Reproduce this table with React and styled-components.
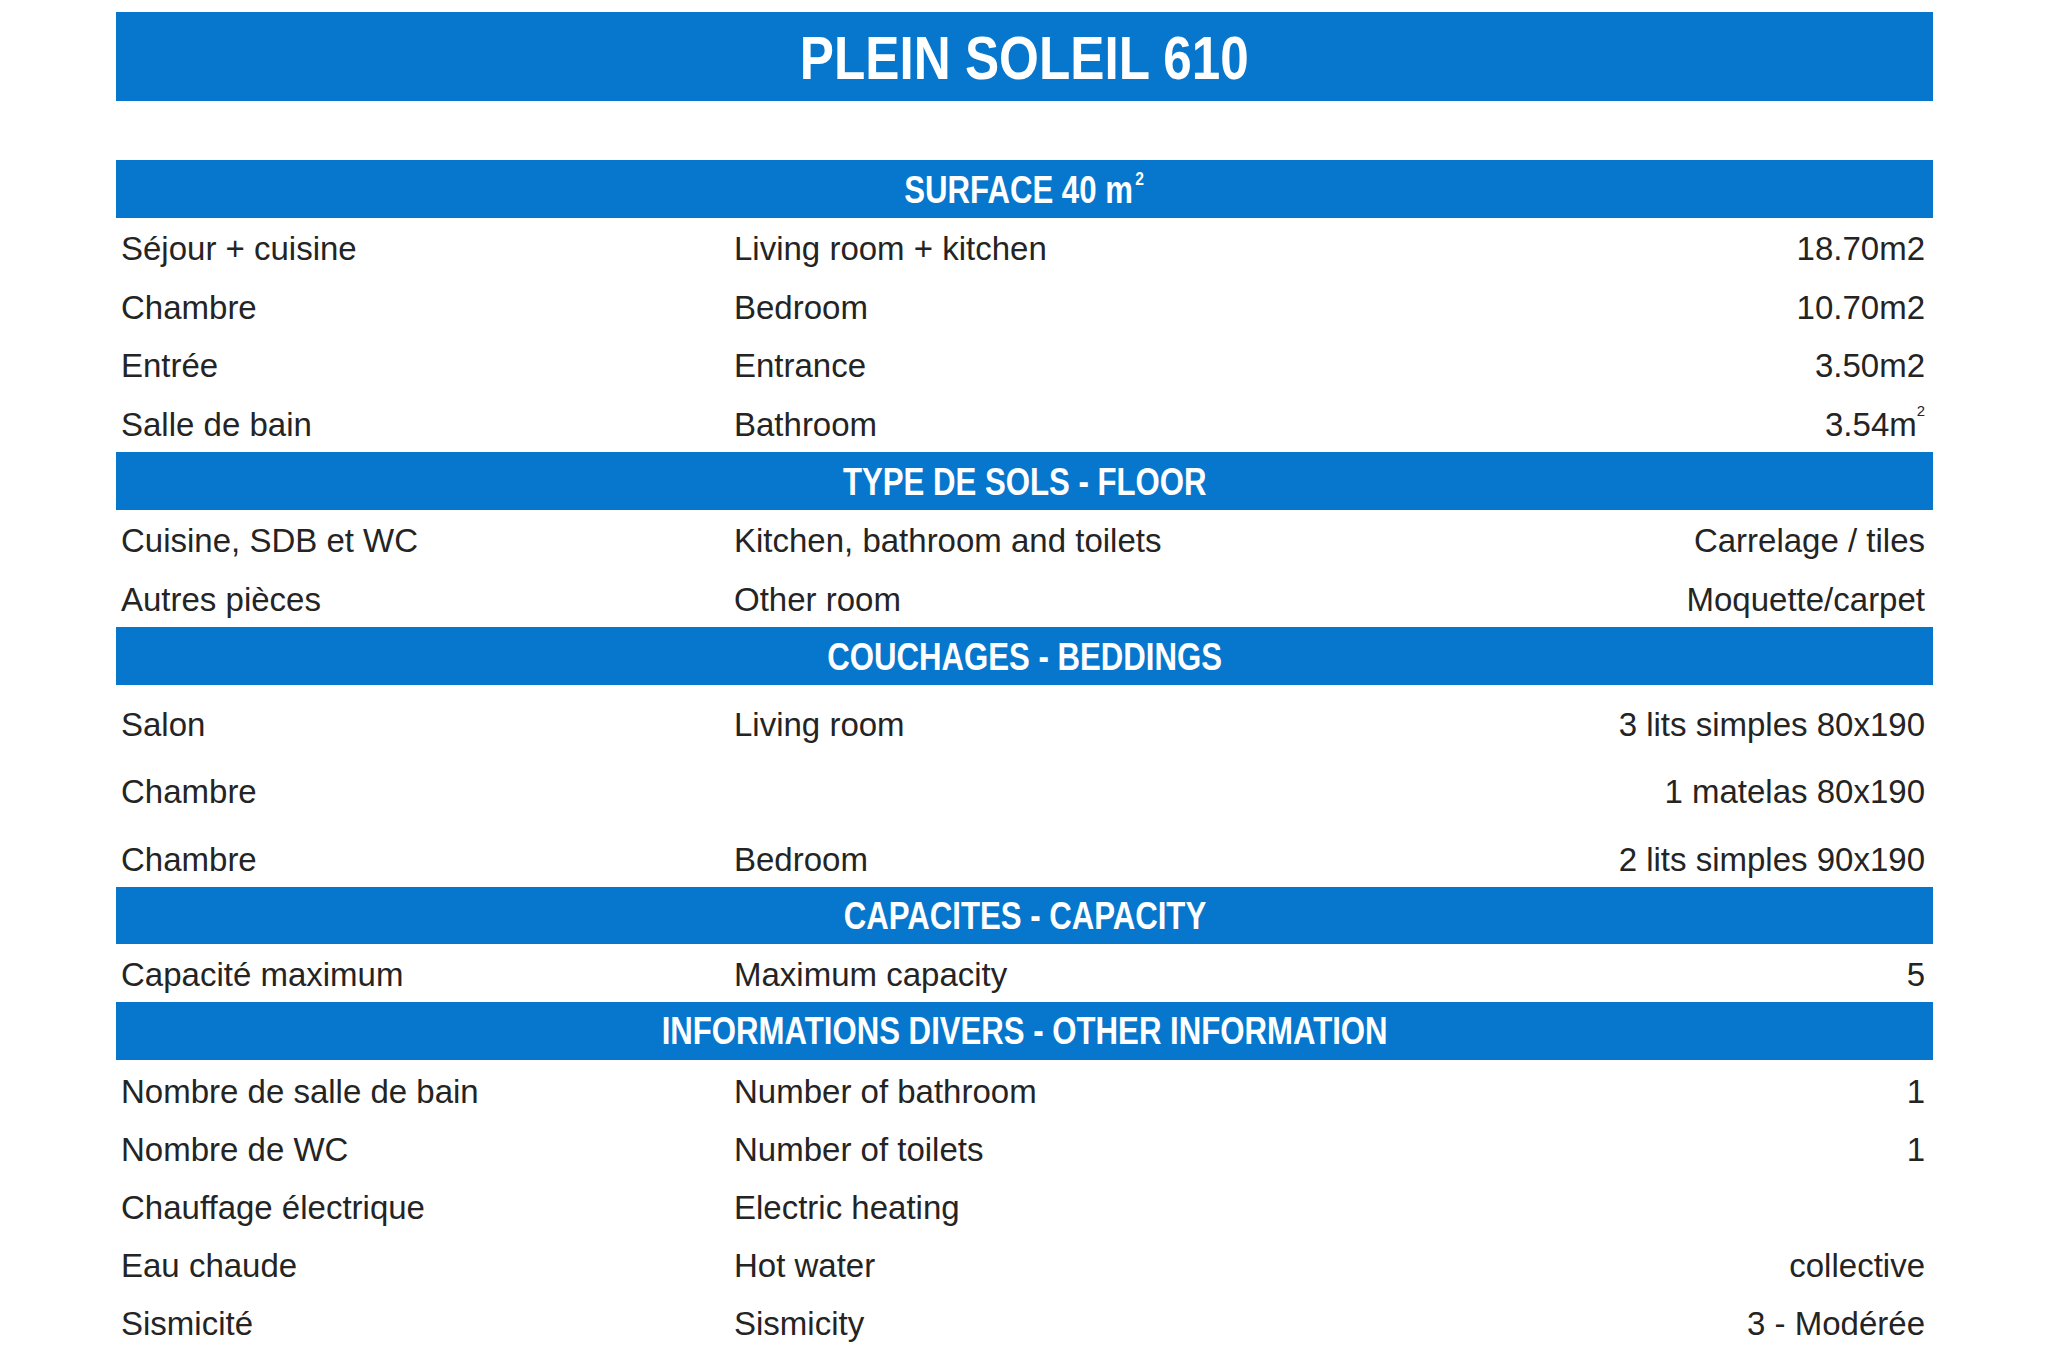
import React from "react";
import styled, { createGlobalStyle } from "styled-components";

const Global = createGlobalStyle`
  html, body { margin: 0; padding: 0; background: #ffffff; }
  body { font-family: "Liberation Sans", Arial, sans-serif; }
`;

const BLUE = "#0677cd";
const HEAD_FONT = `"Liberation Sans Narrow", "Liberation Sans", Arial, sans-serif`;

const Page = styled.div`
  width: 1817px;
  margin: 0 0 0 116px;
  padding-top: 12px;
  display: flex;
  flex-direction: column;
`;

const TitleBar = styled.h1`
  margin: 0 0 59px 0;
  height: 89px;
  background: ${BLUE};
  color: #fff;
  display: flex;
  align-items: center;
  justify-content: center;
  font-family: ${HEAD_FONT};
  font-weight: 700;
  font-size: 61px;
  padding-top: 2px;
  box-sizing: border-box;
`;

const Narrow = styled.span`
  display: inline-block;
  white-space: nowrap;
  transform: scaleX(${(p) => p.$sx});
`;

const SectionBar = styled.div`
  height: ${(p) => p.$h || 58}px;
  background: ${BLUE};
  color: #fff;
  display: flex;
  align-items: center;
  justify-content: center;
  font-family: ${HEAD_FONT};
  font-weight: 700;
  font-size: 38px;
  padding-top: 2px;
  box-sizing: border-box;
  sup { font-size: 0.5em; line-height: 0; position: relative; top: -0.2em; margin-left: 3px; }
`;

const Row = styled.div`
  height: ${(p) => p.$h}px;
  display: grid;
  grid-template-columns: 613px 1fr auto;
  align-items: center;
  padding: ${(p) => p.$pt}px 8px 0 5px;
  box-sizing: border-box;
  color: #242424;
  font-size: 33px;
  line-height: 1;
  sup { font-size: 0.45em; line-height: 0; position: relative; top: -0.5em; }
`;

const Cell = styled.span`
  white-space: nowrap;
  text-align: ${(p) => (p.$right ? "right" : "left")};
`;

const sections = [
  {
    title: (
      <>
        SURFACE 40 m<sup>2</sup>
      </>
    ),
    h: 58.5,
    pt: 3,
    rows: [
      ["Séjour + cuisine", "Living room + kitchen", "18.70m2"],
      ["Chambre", "Bedroom", "10.70m2"],
      ["Entrée", "Entrance", "3.50m2"],
      ["Salle de bain", "Bathroom", <>3.54m<sup>2</sup></>],
    ],
  },
  {
    title: "TYPE DE SOLS - FLOOR",
    h: 58.5,
    pt: 3,
    rows: [
      ["Cuisine, SDB et WC", "Kitchen, bathroom and toilets", "Carrelage / tiles"],
      ["Autres pièces", "Other room", "Moquette/carpet"],
    ],
  },
  {
    title: "COUCHAGES - BEDDINGS",
    h: 67.3,
    pt: 12,
    rows: [
      ["Salon", "Living room", "3 lits simples 80x190"],
      ["Chambre", "", "1 matelas 80x190"],
      ["Chambre", "Bedroom", "2 lits simples 90x190"],
    ],
  },
  {
    title: "CAPACITES - CAPACITY",
    h: 58,
    pt: 4,
    barH: 57,
    rows: [["Capacité maximum", "Maximum capacity", "5"]],
  },
  {
    title: "INFORMATIONS DIVERS - OTHER INFORMATION",
    h: 58,
    pt: 6,
    rows: [
      ["Nombre de salle de bain", "Number of bathroom", "1"],
      ["Nombre de WC", "Number of toilets", "1"],
      ["Chauffage électrique", "Electric heating", ""],
      ["Eau chaude", "Hot water", "collective"],
      ["Sismicité", "Sismicity", "3 - Modérée"],
    ],
  },
];

export default function App() {
  return (
    <>
      <Global />
      <Page>
        <TitleBar>
          <Narrow $sx={0.84}>PLEIN SOLEIL 610</Narrow>
        </TitleBar>
        {sections.map((s, i) => (
          <section key={i}>
            <SectionBar $h={s.barH}>
              <Narrow $sx={0.82}>{s.title}</Narrow>
            </SectionBar>
            {s.rows.map((r, j) => (
              <Row key={j} $h={s.h} $pt={s.pt}>
                <Cell>{r[0]}</Cell>
                <Cell>{r[1]}</Cell>
                <Cell $right>{r[2]}</Cell>
              </Row>
            ))}
          </section>
        ))}
      </Page>
    </>
  );
}
